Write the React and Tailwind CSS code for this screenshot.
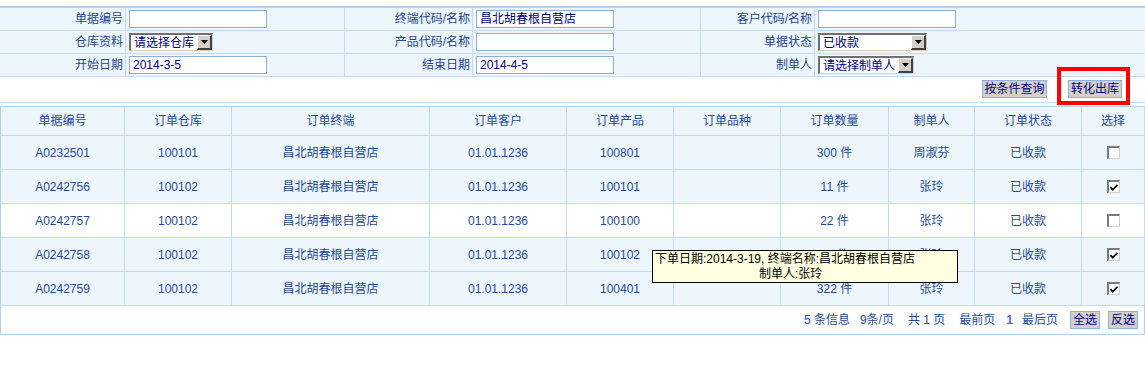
// App.jsx
const FONT = "font-['Liberation_Sans','Noto_Sans_CJK_SC',sans-serif]";

const orders = [
  { no: "A0232501", wh: "100101", term: "昌北胡春根自营店", cust: "01.01.1236", prod: "100801", qty: "300 件", maker: "周淑芬", checked: false },
  { no: "A0242756", wh: "100102", term: "昌北胡春根自营店", cust: "01.01.1236", prod: "100101", qty: "11 件", maker: "张玲", checked: true },
  { no: "A0242757", wh: "100102", term: "昌北胡春根自营店", cust: "01.01.1236", prod: "100100", qty: "22 件", maker: "张玲", checked: false, plain: true },
  { no: "A0242758", wh: "100102", term: "昌北胡春根自营店", cust: "01.01.1236", prod: "100102", qty: "50 件", maker: "张玲", checked: true },
  { no: "A0242759", wh: "100102", term: "昌北胡春根自营店", cust: "01.01.1236", prod: "100401", qty: "322 件", maker: "张玲", checked: true },
];

const headers = ["单据编号", "订单仓库", "订单终端", "订单客户", "订单产品", "订单品种", "订单数量", "制单人", "订单状态", "选择"];

const COLS = "grid grid-cols-[124px_107px_198px_137px_107px_107px_108px_86px_107px_63px]";

// classic inset text box
const TextBox = ({ value = "" }) => (
  <div className="flex h-[18px] w-[138px] items-center border border-[#8fb0d6] bg-white pl-[3px] text-[12px] text-[#000080]">
    {value}
  </div>
);

// old windows style combo box
const Combo = ({ value, width }) => (
  <div className={`flex h-[18px] items-stretch border-t-2 border-l-2 border-b border-r border-t-[#707070] border-l-[#707070] border-b-[#d4d0c8] border-r-[#d4d0c8] bg-white ${width}`}>
    <span className="flex flex-1 items-center pl-[3px] text-[12px] leading-none text-[#000080]">{value}</span>
    <span className="flex w-[15px] items-center justify-center border-t border-l border-b-2 border-r-2 border-t-white border-l-white border-b-[#404040] border-r-[#404040] bg-[#d4d0c8]">
      <svg width="7" height="4" viewBox="0 0 7 4">
        <path d="M0 0h7L3.5 4z" fill="#000" />
      </svg>
    </span>
  </div>
);

const Btn = ({ children, className = "" }) => (
  <button className={`flex h-[18px] items-center justify-center border border-[#8fb0d6] bg-[#d4d0c8] text-[12px] leading-none text-[#000080] ${className}`}>
    {children}
  </button>
);

const CheckBox = ({ checked }) => (
  <span className="flex h-[13px] w-[13px] items-center justify-center border-t-2 border-l-2 border-b border-r border-t-[#7a7a7a] border-l-[#7a7a7a] border-b-[#d4d0c8] border-r-[#d4d0c8] bg-white">
    {checked && (
      <svg width="8" height="7" viewBox="0 0 8 7">
        <path d="M0.5 3.2 L2.8 5.6 L7.5 0.8" stroke="#000" strokeWidth="1.8" fill="none" />
      </svg>
    )}
  </span>
);

const Label = ({ children }) => (
  <div className="flex items-center justify-end border-r border-[#c4daf1] pr-[2px] text-[12px] text-[#24478f]">{children}</div>
);

const Field = ({ children, last }) => (
  <div className={`flex items-center pl-[3px] ${last ? "" : "border-r border-[#c4daf1]"}`}>{children}</div>
);

const FormRow = ({ children }) => (
  <div className="grid h-[23px] grid-cols-[126px_219px_128px_228px_114px_330px] border-b border-[#c4daf1] bg-[#edf5fd]">{children}</div>
);

export default function App() {
  return (
    <div className={`relative w-[1145px] bg-white pt-[6px] ${FONT}`}>
      {/* query form */}
      <div className="border-t-2 border-[#b3cfee]">
        <FormRow>
          <Label>单据编号</Label>
          <Field><TextBox /></Field>
          <Label>终端代码/名称</Label>
          <Field><TextBox value="昌北胡春根自营店" /></Field>
          <Label>客户代码/名称</Label>
          <Field last><TextBox /></Field>
        </FormRow>
        <FormRow>
          <Label>仓库资料</Label>
          <Field><Combo value="请选择仓库" width="w-[84px]" /></Field>
          <Label>产品代码/名称</Label>
          <Field><TextBox /></Field>
          <Label>单据状态</Label>
          <Field last><Combo value="已收款" width="w-[109px]" /></Field>
        </FormRow>
        <FormRow>
          <Label>开始日期</Label>
          <Field><TextBox value="2014-3-5" /></Field>
          <Label>结束日期</Label>
          <Field><TextBox value="2014-4-5" /></Field>
          <Label>制单人</Label>
          <Field last><Combo value="请选择制单人" width="w-[96px]" /></Field>
        </FormRow>
        <div className="flex h-[26px] items-start justify-end gap-[21px] border-b border-[#c4daf1] pt-[3px] pr-[23px]">
          <Btn className="w-[65px]">按条件查询</Btn>
          <Btn className="w-[54px]">转化出库</Btn>
        </div>
      </div>

      {/* annotation box */}
      <div className="pointer-events-none absolute left-[1057px] top-[67px] h-[38px] w-[73px] border-4 border-[#ff0000]" />

      {/* order list */}
      <div className="relative mt-[3px] border-t border-l border-[#b3cfee] text-[12px] text-[#1f4a97]">
        <div className={`${COLS} h-[29px] border-b border-[#c4daf1] bg-[#edf5fd]`}>
          {headers.map((h) => (
            <div key={h} className="flex items-center justify-center border-r border-[#c4daf1]">{h}</div>
          ))}
        </div>
        {orders.map((o) => (
          <div key={o.no} className={`${COLS} h-[34px] border-b border-[#c4daf1] ${o.plain ? "bg-white" : "bg-[#edf5fd]"}`}>
            {[o.no, o.wh, o.term, o.cust, o.prod, "", o.qty, o.maker, "已收款"].map((v, i) => (
              <div key={i} className="flex items-center justify-center border-r border-[#c4daf1]">{v}</div>
            ))}
            <div className="flex items-center justify-center border-r border-[#c4daf1]">
              <CheckBox checked={o.checked} />
            </div>
          </div>
        ))}
        <div className="flex h-[29px] items-center justify-end border-r border-b border-[#b3cfee] pr-[6px]">
          <span>5 条信息</span>
          <span className="ml-[10px]">9条/页</span>
          <span className="ml-[14px]">共 1 页</span>
          <span className="ml-[14px]">最前页</span>
          <span className="ml-[11px] font-bold text-[#5c5cff]">1</span>
          <span className="ml-[9px]">最后页</span>
          <Btn className="ml-[12px] w-[30px]">全选</Btn>
          <Btn className="ml-[8px] w-[30px]">反选</Btn>
        </div>

        {/* hover tip */}
        <div className="absolute left-[651px] top-[143px] h-[33px] w-[306px] border border-black bg-[#ffffe1] pl-[2px] pt-[1px] text-[12px] leading-[15px] text-black">
          <div className="whitespace-nowrap">下单日期:2014-3-19, 终端名称:昌北胡春根自营店</div>
          <div className="pl-[104px]">制单人:张玲</div>
        </div>
      </div>
    </div>
  );
}
